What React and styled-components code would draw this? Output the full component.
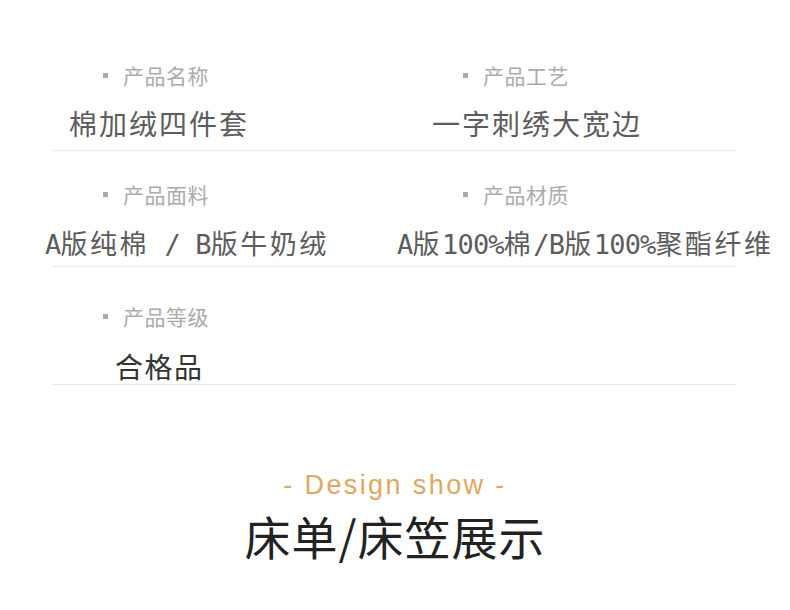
import styled, { createGlobalStyle } from "styled-components";

const GlobalStyle = createGlobalStyle`
  body {
    margin: 0;
    background: #ffffff;
    font-family: "Noto Sans CJK SC", "Noto Sans", sans-serif;
  }
`;

const Page = styled.div`
  width: 790px;
  height: 610px;
  overflow: hidden;
  background: #fff;
`;

const Specs = styled.div`
  margin: 0 54px 0 52px;
`;

const Row = styled.div`
  display: grid;
  grid-template-columns: 342px 342px;
  padding-top: ${(p) => p.$top}px;
  padding-bottom: ${(p) => p.$bottom}px;
  border-bottom: 1px solid #ececec;
`;

const Cell = styled.div`
  display: flex;
  flex-direction: column;
  gap: ${(p) => p.$gap}px;
  min-width: 0;
`;

const Label = styled.div`
  display: flex;
  align-items: center;
  padding-left: ${(p) => p.$indent}px;
  font-size: 21px;
  line-height: 24px;
  letter-spacing: 0.5px;
  color: #ababab;
  &::before {
    content: "";
    width: 5px;
    height: 5px;
    margin-right: 15px;
    background: #aaaaaa;
  }
`;

const Value = styled.div`
  margin-left: ${(p) => p.$indent}px;
  font-size: ${(p) => p.$size || 28}px;
  line-height: ${(p) => (p.$size || 28) + 6}px;
  letter-spacing: ${(p) => p.$spacing ?? 2}px;
  color: ${(p) => (p.$dark ? "#333333" : "#5c5c5c")};
  white-space: nowrap;
`;

const Latin = styled.span`
  font-family: "DejaVu Sans Mono", "Liberation Mono", monospace;
  letter-spacing: -0.8px;
`;

const Heading = styled.div`
  margin-top: 84px;
  display: flex;
  flex-direction: column;
  align-items: center;
  gap: 7px;
`;

const SubTitle = styled.div`
  font-family: "Liberation Sans", "Lato", sans-serif;
  font-size: 27px;
  line-height: 32px;
  letter-spacing: 2.4px;
  color: #dea863;
`;

const Title = styled.div`
  font-size: 46px;
  line-height: 54px;
  letter-spacing: 1px;
  color: #222222;
`;

export default function App() {
  return (
    <Page>
      <GlobalStyle />
      <Specs>
        <Row $top={63} $bottom={10}>
          <Cell $gap={19}>
            <Label $indent={51}>产品名称</Label>
            <Value $indent={17}>棉加绒四件套</Value>
          </Cell>
          <Cell $gap={19}>
            <Label $indent={69}>产品工艺</Label>
            <Value $indent={38}>一字刺绣大宽边</Value>
          </Cell>
        </Row>
        <Row $top={31} $bottom={5}>
          <Cell $gap={20}>
            <Label $indent={51}>产品面料</Label>
            <Value $indent={-7} $size={27} $spacing={2.5}>
              <Latin>A</Latin>版纯棉<Latin> / B</Latin>版牛奶绒
            </Value>
          </Cell>
          <Cell $gap={20}>
            <Label $indent={69}>产品材质</Label>
            <Value $indent={3} $size={27} $spacing={2.5}>
              <Latin>A</Latin>版<Latin>100%</Latin>棉<Latin>/B</Latin>版<Latin>100%</Latin>聚酯纤维
            </Value>
          </Cell>
        </Row>
        <Row $top={37} $bottom={1}>
          <Cell $gap={21}>
            <Label $indent={51}>产品等级</Label>
            <Value $indent={63} $spacing={1.5} $dark>合格品</Value>
          </Cell>
          <Cell $gap={21} />
        </Row>
      </Specs>
      <Heading>
        <SubTitle>- Design show -</SubTitle>
        <Title>床单/床笠展示</Title>
      </Heading>
    </Page>
  );
}
